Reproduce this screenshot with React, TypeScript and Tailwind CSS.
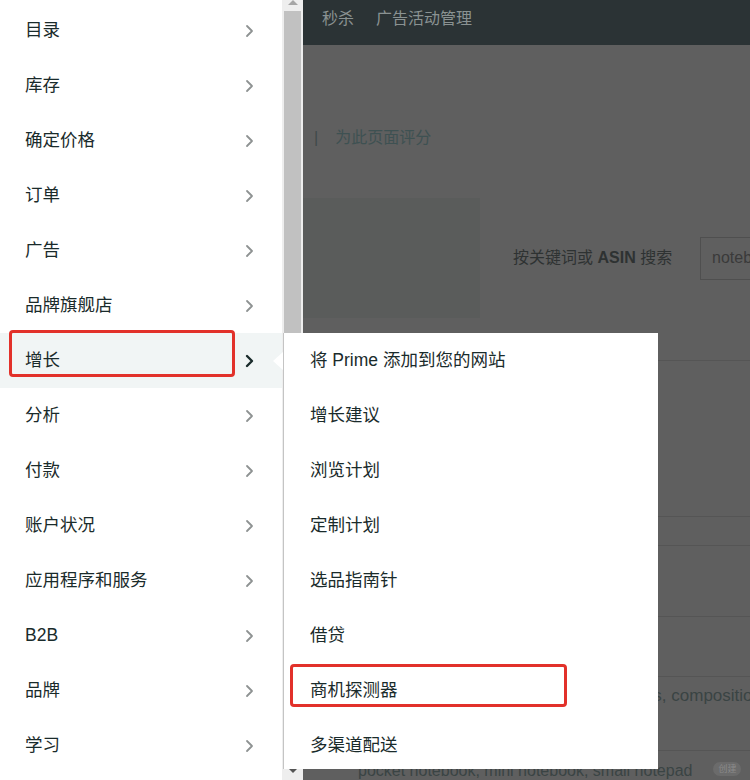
import React from "react";

const leftItems = [
  "目录",
  "库存",
  "确定价格",
  "订单",
  "广告",
  "品牌旗舰店",
  "增长",
  "分析",
  "付款",
  "账户状况",
  "应用程序和服务",
  "B2B",
  "品牌",
  "学习",
];

const subItems = [
  "将 Prime 添加到您的网站",
  "增长建议",
  "浏览计划",
  "定制计划",
  "选品指南针",
  "借贷",
  "商机探测器",
  "多渠道配送",
];

function Chevron({ active }: { active?: boolean }) {
  return (
    <svg width="9" height="14" viewBox="0 0 9 14" fill="none">
      <polyline
        points="2,2 7,7 2,12"
        stroke={active ? "#1a2b2b" : "#8e9292"}
        strokeWidth={active ? 2.4 : 1.8}
        strokeLinecap="round"
        strokeLinejoin="round"
      />
    </svg>
  );
}

export default function App() {
  return (
    <div className="relative flex h-[780px] w-[750px] overflow-hidden bg-white font-['Liberation_Sans','Noto_Sans_CJK_SC',sans-serif]">
      {/* main navigation column */}
      <nav className="flex w-[282px] shrink-0 flex-col bg-white pt-[3px]">
        {leftItems.map((label, i) => {
          const active = i === 6;
          return (
            <div
              key={label}
              className={`relative flex h-[55px] shrink-0 items-center justify-between pl-[25px] pr-[28px] ${
                active ? "bg-[#f1f5f5]" : ""
              }`}
            >
              <span className="text-[17.5px] leading-none text-[#1a2b2b]">{label}</span>
              <Chevron active={active} />
              {active && (
                <div className="absolute left-[9px] top-[-3px] h-[47px] w-[226px] rounded-[4px] border-[3px] border-[#e2312a]" />
              )}
            </div>
          );
        })}
      </nav>

      {/* scrollbar */}
      <div className="flex w-[21px] shrink-0 flex-col bg-[#eeeeee]">
        <div className="flex h-[11px] shrink-0 justify-center">
          <div className="h-0 w-0 border-x-[5px] border-b-[5px] border-x-transparent border-b-[#a6a6a6]" />
        </div>
        <div className="mx-[2px] flex-1 bg-[#c1c1c1]" />
        <div className="flex h-[20px] shrink-0 items-center justify-center">
          <div className="h-0 w-0 border-x-[5px] border-t-[5px] border-x-transparent border-t-[#555555]" />
        </div>
      </div>

      {/* page behind the dimmed overlay */}
      <main className="flex min-w-0 flex-1 flex-col bg-[#5f5f5f]">
        <header className="flex h-[45px] shrink-0 items-center gap-[22px] bg-[#2b3335] pb-[8px] pl-[19px] text-[16px] text-[#8a9292]">
          <span>秒杀</span>
          <span>广告活动管理</span>
        </header>

        <div className="mt-[83px] flex h-[20px] items-center pl-[11px] text-[16px] text-[#3e5152]">
          <span className="text-[#404a4a]">|</span>
          <span className="ml-[17px]">为此页面评分</span>
        </div>

        <div className="mt-[50px] flex h-[120px] shrink-0 items-center">
          <div className="h-full w-[177px] shrink-0 bg-[#5a5c5b]" />
          <div className="ml-[33px] w-[187px] shrink-0 text-[16px] text-[#2e3232]">
            按关键词或 <span className="font-bold">ASIN</span> 搜索
          </div>
          <div className="flex h-[43px] flex-1 items-center overflow-hidden whitespace-nowrap border border-r-0 border-[#4f4f4f] pl-[11px] text-[16px] text-[#3a3a3a]">
            noteb
          </div>
        </div>

        <div className="h-[43px] shrink-0 border-b border-[#555555]" />
        <div className="h-[156px] shrink-0 border-b border-[#555555]" />
        <div className="h-[29px] shrink-0 border-b border-[#555555]" />
        <div className="h-[71px] shrink-0 border-b border-[#555555]" />
        <div className="h-[60px] shrink-0 border-b border-[#555555]" />
        <div className="flex h-[74px] shrink-0 items-start justify-end overflow-hidden whitespace-nowrap border-b border-[#555555] pt-[6px] text-[17px] text-[#3a4444]">
          <span className="-mr-[12px]">notebooks, composition</span>
        </div>
        <div className="flex items-start whitespace-nowrap pl-[55px] pt-[8px] text-[16px] text-[#3a4444]">
          <span>pocket notebook, mini notebook, small notepad</span>
          <span className="ml-[21px] mt-[3px] rounded-full bg-[#6b6b6b] px-[5px] text-[9px] leading-[14px] text-[#8a8a8a]">
            创建
          </span>
        </div>
      </main>

      {/* pointer from the active row into the flyout */}
      <div className="absolute left-[273px] top-[352px] h-0 w-0 border-y-[9px] border-r-[10px] border-y-transparent border-r-white" />

      {/* flyout submenu */}
      <div className="absolute left-[283px] top-[333px] flex h-[436px] w-[375px] flex-col overflow-hidden border-l border-[#c4c4c4] bg-white">
        {subItems.map((label, i) => (
          <div key={label} className="relative flex h-[55px] shrink-0 items-center pl-[26px]">
            <span className="text-[17.5px] leading-none text-[#1a2b2b]">{label}</span>
            {i === 6 && (
              <div className="absolute left-[6px] top-[1px] h-[43px] w-[277px] rounded-[4px] border-[3px] border-[#e2312a]" />
            )}
          </div>
        ))}
      </div>
    </div>
  );
}
